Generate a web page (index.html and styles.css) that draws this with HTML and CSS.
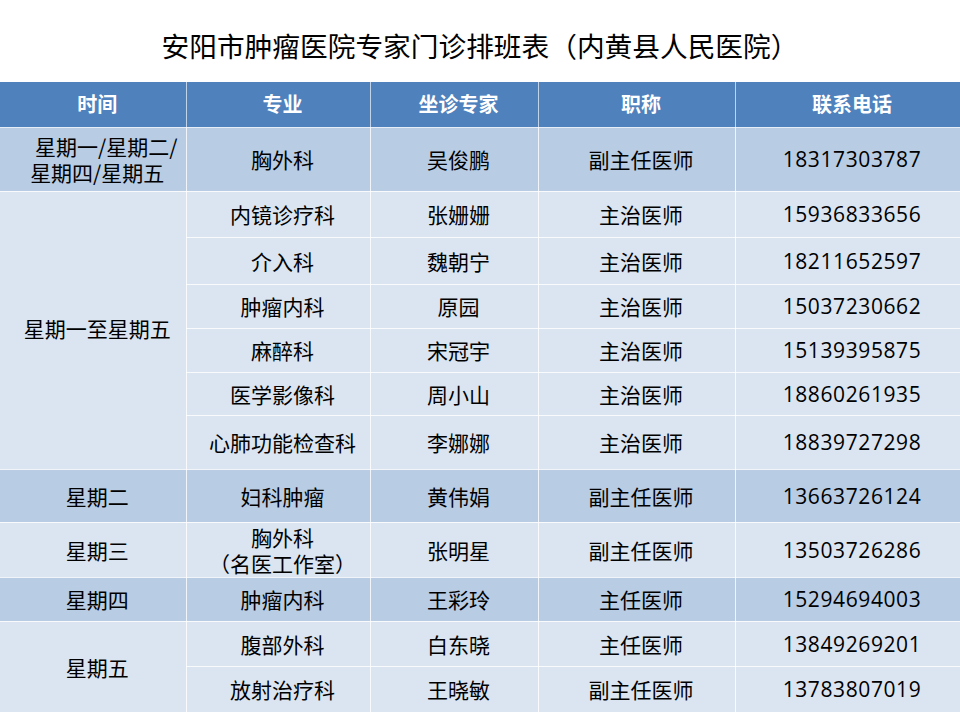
FILE: index.html
```html
<!DOCTYPE html>
<html lang="zh-CN">
<head>
<meta charset="utf-8">
<title>安阳市肿瘤医院专家门诊排班表</title>
<link rel="stylesheet" href="styles.css">
</head>
<body>
<div class="title">安阳市肿瘤医院专家门诊排班表（内黄县人民医院）</div>
<table class="sched">
  <colgroup>
    <col class="c1"><col class="c2"><col class="c3"><col class="c4"><col class="c5">
  </colgroup>
  <thead>
    <tr class="h45">
      <th>时间</th><th>专业</th><th>坐诊专家</th><th>职称</th><th>联系电话</th>
    </tr>
  </thead>
  <tbody>
    <tr class="dark h64">
      <td class="multi"><span class="l1">星期一/星期二/</span><br>星期四/星期五</td>
      <td>胸外科</td><td>吴俊鹏</td><td>副主任医师</td><td class="num">18317303787</td>
    </tr>
    <tr class="light h46">
      <td rowspan="6" class="up">星期一至星期五</td>
      <td>内镜诊疗科</td><td>张姗姗</td><td>主治医师</td><td class="num">15936833656</td>
    </tr>
    <tr class="light h47">
      <td>介入科</td><td>魏朝宁</td><td>主治医师</td><td class="num">18211652597</td>
    </tr>
    <tr class="light h44">
      <td>肿瘤内科</td><td>原园</td><td>主治医师</td><td class="num">15037230662</td>
    </tr>
    <tr class="light h44">
      <td>麻醉科</td><td>宋冠宇</td><td>主治医师</td><td class="num">15139395875</td>
    </tr>
    <tr class="light h43">
      <td>医学影像科</td><td>周小山</td><td>主治医师</td><td class="num">18860261935</td>
    </tr>
    <tr class="light h54">
      <td>心肺功能检查科</td><td>李娜娜</td><td>主治医师</td><td class="num">18839727298</td>
    </tr>
    <tr class="dark h53">
      <td>星期二</td><td>妇科肿瘤</td><td>黄伟娟</td><td>副主任医师</td><td class="num">13663726124</td>
    </tr>
    <tr class="light h55">
      <td>星期三</td><td class="multi">胸外科<br>（名医工作室）</td><td>张明星</td><td>副主任医师</td><td class="num">13503726286</td>
    </tr>
    <tr class="dark h44">
      <td>星期四</td><td>肿瘤内科</td><td>王彩玲</td><td>主任医师</td><td class="num">15294694003</td>
    </tr>
    <tr class="light h45">
      <td rowspan="2">星期五</td>
      <td>腹部外科</td><td>白东晓</td><td>主任医师</td><td class="num">13849269201</td>
    </tr>
    <tr class="light h46">
      <td>放射治疗科</td><td>王晓敏</td><td>副主任医师</td><td class="num">13783807019</td>
    </tr>
  </tbody>
</table>
</body>
</html>
```

FILE: styles.css
```css
html, body {
  margin: 0;
  padding: 0;
  background: #ffffff;
}

body {
  width: 960px;
  height: 720px;
  overflow: hidden;
  font-family: "Noto Sans CJK SC", "Noto Sans", sans-serif;
  color: #000;
}

.title {
  height: 82px;
  box-sizing: border-box;
  padding-top: 26px;
  text-align: center;
  font-size: 27.7px;
  line-height: 38px;
}

.sched {
  width: 960px;
  table-layout: fixed;
  border-collapse: collapse;
  font-size: 21px;
}

.c1 { width: 186px; }
.c2 { width: 184px; }
.c3 { width: 168px; }
.c4 { width: 197px; }
.c5 { width: 225px; }

.sched th,
.sched td {
  border: 1px solid rgba(255, 255, 255, 0.8);
  text-align: center;
  vertical-align: middle;
  padding: 0 0 0 9px;
  line-height: 26px;
  font-weight: 400;
  box-sizing: border-box;
  white-space: nowrap;
}

.sched tr > :first-child { border-left: none; }
.sched tbody tr:last-child td { border-bottom: none; }

.sched th {
  background: #4f81bd;
  color: #fff;
  font-weight: 700;
  font-size: 20px;
  border-top: none;
  border-color: rgba(255, 255, 255, 0.65);
}

.dark td { background: #b8cce4; }
.light td { background: #dbe5f1; }

.multi { line-height: 25px; }
.multi .l1 { padding-left: 18px; }

.sched td.up { padding-bottom: 4px; }

.num {
  font-family: "Open Sans", "Noto Sans", sans-serif;
  letter-spacing: 0.6px;
}

.h43 { height: 43px; }
.h44 { height: 44px; }
.h45 { height: 45px; }
.h46 { height: 46px; }
.h47 { height: 47px; }
.h53 { height: 53px; }
.h54 { height: 54px; }
.h55 { height: 55px; }
.h64 { height: 64px; }
```
